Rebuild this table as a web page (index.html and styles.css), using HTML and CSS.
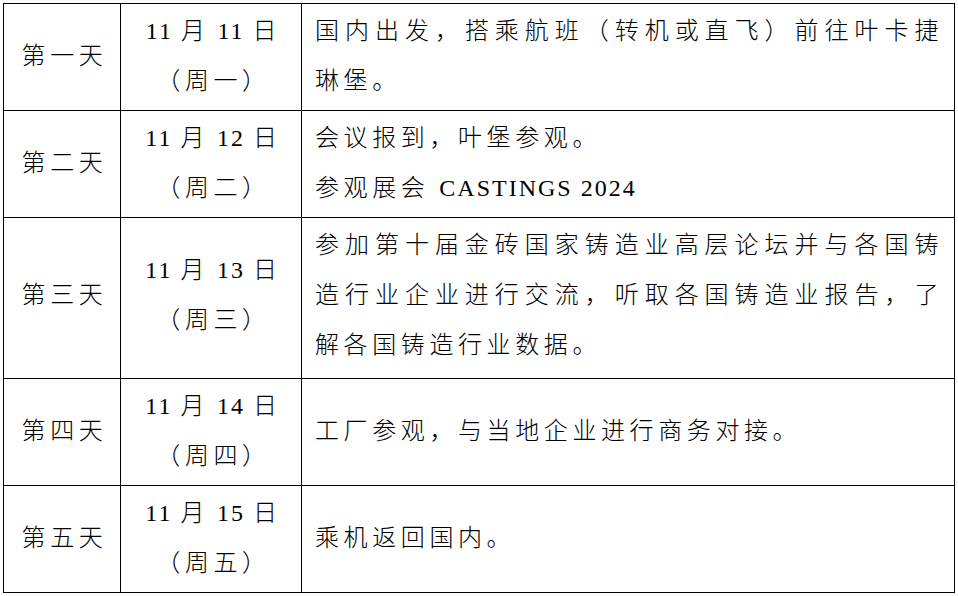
FILE: index.html
```html
<!DOCTYPE html>
<html lang="zh-CN">
<head>
<meta charset="utf-8">
<title>行程安排</title>
<link rel="stylesheet" href="styles.css">
</head>
<body>
<table class="schedule">
  <colgroup>
    <col class="c-day">
    <col class="c-date">
    <col class="c-plan">
  </colgroup>
  <tbody>
    <tr class="r2">
      <td class="day">第一天</td>
      <td class="date"><span class="lat">11 </span>月<span class="lat"> 11 </span>日<br>（周一）</td>
      <td class="plan">国内出发，搭乘航班（转机或直飞）前往叶卡捷琳堡。</td>
    </tr>
    <tr class="r2">
      <td class="day">第二天</td>
      <td class="date"><span class="lat">11 </span>月<span class="lat"> 12 </span>日<br>（周二）</td>
      <td class="plan">会议报到，叶堡参观。<br>参观展会 <span class="lat">CASTINGS 2024</span></td>
    </tr>
    <tr class="r3">
      <td class="day">第三天</td>
      <td class="date"><span class="lat">11 </span>月<span class="lat"> 13 </span>日<br>（周三）</td>
      <td class="plan">参加第十届金砖国家铸造业高层论坛并与各国铸造行业企业进行交流，听取各国铸造业报告，了解各国铸造行业数据。</td>
    </tr>
    <tr class="r2">
      <td class="day">第四天</td>
      <td class="date"><span class="lat">11 </span>月<span class="lat"> 14 </span>日<br>（周四）</td>
      <td class="plan">工厂参观，与当地企业进行商务对接。</td>
    </tr>
    <tr class="r2">
      <td class="day">第五天</td>
      <td class="date"><span class="lat">11 </span>月<span class="lat"> 15 </span>日<br>（周五）</td>
      <td class="plan">乘机返回国内。</td>
    </tr>
  </tbody>
</table>
</body>
</html>
```

FILE: styles.css
```css
html, body {
  background: #fff;
}

body {
  margin: 3px;
  font-family: "Noto Sans CJK SC", sans-serif;
  color: #000;
}

.schedule {
  border-collapse: collapse;
  table-layout: fixed;
  width: 951px;
  font-size: 24px;
  font-weight: 300;
  line-height: 50px;
  letter-spacing: 4.6px;
}

.c-day { width: 117px; }
.c-date { width: 181px; }
.c-plan { width: 653px; }

.schedule td {
  border: 1px solid #000;
  padding: 0 0 6px;
  vertical-align: middle;
}

.schedule .day,
.schedule .date {
  text-align: center;
  padding-left: 5px;
}

.schedule .plan {
  text-align: justify;
  padding-left: 13px;
  padding-right: 11px;
}

.r3 td {
  padding-bottom: 10px;
}

.lat {
  font-family: "Liberation Serif", serif;
  font-weight: 400;
  font-size: 24px;
  line-height: 1;
  letter-spacing: 2px;
}
```
